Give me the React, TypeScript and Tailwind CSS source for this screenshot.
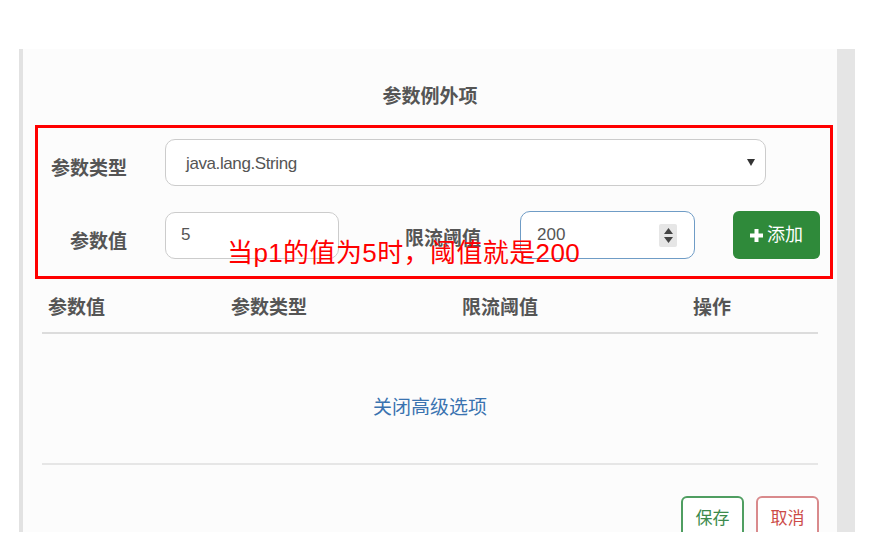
import React from 'react';

const font = "font-['Liberation_Sans','Noto_Sans_CJK_SC',sans-serif]";

const Caret: React.FC = () => (
  <svg width="8" height="7" viewBox="0 0 8 7">
    <path d="M0 0h8L4 7z" fill="#333" />
  </svg>
);

const Spinner: React.FC = () => (
  <div className="flex flex-col items-center justify-center gap-[3px] w-[18px] h-[23px] bg-[#e6e6e6] rounded-[2px]">
    <svg width="9" height="6" viewBox="0 0 9 6">
      <path d="M0 6h9L4.5 0z" fill="#444" />
    </svg>
    <svg width="9" height="6" viewBox="0 0 9 6">
      <path d="M0 0h9L4.5 6z" fill="#444" />
    </svg>
  </div>
);

const Plus: React.FC = () => (
  <svg width="13" height="13" viewBox="0 0 13 13">
    <rect x="4.5" y="0" width="4" height="13" fill="#fff" />
    <rect x="0" y="4.5" width="13" height="4" fill="#fff" />
  </svg>
);

const App: React.FC = () => {
  const columns = [
    { label: '参数值', width: 'w-[183px]' },
    { label: '参数类型', width: 'w-[231px]' },
    { label: '限流阈值', width: 'w-[231px]' },
    { label: '操作', width: 'flex-1' },
  ];

  return (
    <div className={`w-[886px] h-[559px] bg-white pt-[49px] pl-[19px] ${font}`}>
      <div className="flex w-[836px] h-[483px] overflow-hidden">
        <div className="w-[4px] bg-[#e2e2e2]" />

        <div className="flex-1 bg-[#fcfcfc] pt-[35px]">
          <h2 className="text-center text-[19px] leading-[26px] font-bold text-[#555]">参数例外项</h2>

          {/* annotated form */}
          <div className="relative mt-[15px] ml-[12px] w-[798px] border-[3px] border-[#f00] pt-[11px] pb-[17px]">
            <div className="flex items-center h-[47px]">
              <span className="w-[89px] pt-[14px] text-right text-[19px] font-bold text-[#555]">参数类型</span>
              <div className="ml-[38px] w-[601px] h-[47px] flex items-center justify-between pl-[20px] pr-[10px] border-[1.5px] border-[#ccc] rounded-[10px] bg-white">
                <span className="pt-[3px] text-[17px] tracking-[-0.4px] text-[#555]">java.lang.String</span>
                <Caret />
              </div>
            </div>

            <div className="flex items-center h-[48px] mt-[25px]">
              <span className="w-[89px] pt-[14px] text-right text-[19px] font-bold text-[#555]">参数值</span>
              <div className="ml-[38px] w-[174px] h-[47px] flex items-center pl-[15px] border-[1.5px] border-[#ccc] rounded-[10px] bg-white">
                <span className="text-[17px] text-[#555]">5</span>
              </div>
              <span className="ml-[66px] w-[77px] pt-[8px] text-[19px] font-bold text-[#555]">限流阈值</span>
              <div className="ml-[38px] w-[175px] h-[48px] flex items-center justify-between pl-[16px] pr-[17px] border-[1.5px] border-[#6f9cc6] rounded-[10px] bg-white">
                <span className="text-[17px] text-[#555]">200</span>
                <Spinner />
              </div>
              <button className="ml-[38px] w-[87px] h-[48px] flex items-center justify-center gap-[4px] bg-[#2f8a3a] rounded-[6px] text-white text-[18px]">
                <Plus />
                <span>添加</span>
              </button>
            </div>

            <span className="absolute left-[189px] top-[112px] text-[26px] leading-[26px] tracking-[0.4px] text-[#f00] whitespace-nowrap">
              当p1的值为5时，阈值就是200
            </span>
          </div>

          {/* table header */}
          <div className="ml-[19px] w-[776px] mt-[16px] flex pl-[6px] pb-[11px] border-b-2 border-[#dcdcdc]">
            {columns.map((c) => (
              <span key={c.label} className={`${c.width} text-[19px] leading-[26px] font-bold text-[#555]`}>{c.label}</span>
            ))}
          </div>

          <div className="ml-[19px] w-[776px] pt-[61px] pb-[42px] border-b-2 border-[#e6e6e6] text-center">
            <a className="text-[19px] leading-[26px] text-[#3a73b0]">关闭高级选项</a>
          </div>

          <div className="flex justify-end gap-[12px] mt-[31px] pr-[18px]">
            <button className="w-[63px] h-[46px] border-2 border-[#4f9e61] rounded-[6px] text-[17px] text-[#3c8a4c] bg-white">保存</button>
            <button className="w-[63px] h-[46px] border-2 border-[#d98a8c] rounded-[6px] text-[17px] text-[#cc4b47] bg-white">取消</button>
          </div>
        </div>

        <div className="w-[18px] bg-[#e5e5e5]" />
      </div>
    </div>
  );
};

export default App;
